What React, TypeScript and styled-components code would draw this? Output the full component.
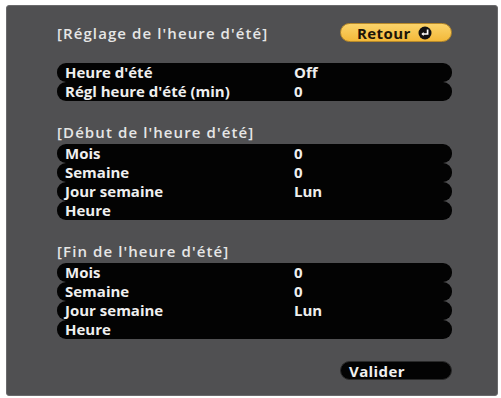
import styled, { createGlobalStyle } from "styled-components";

const GlobalStyle = createGlobalStyle`
	html, body {
		margin: 0;
		padding: 0;
		background: #ffffff;
	}
`;

const Panel = styled.div`
	box-sizing: border-box;
	margin: 5px 3px 0 6px;
	height: 391px;
	background: #505052;
	border: 1px solid #6a6a6c;
	border-radius: 3px;
	padding: 17px 45px 0 50px;
	font-family: "Open Sans", "DejaVu Sans", sans-serif;
	color: #ececec;
`;

const Header = styled.div`
	display: flex;
	justify-content: space-between;
	align-items: center;
	height: 19px;
`;

const SectionTitle = styled.div<{ $top: number }>`
	margin-top: ${(p) => p.$top}px;
	height: 18px;
	line-height: 18px;
	font-size: 15px;
	font-weight: 600;
	letter-spacing: 1.1px;
	color: #e6e6e6;
`;

const RowGroup = styled.div<{ $top: number }>`
	margin-top: ${(p) => p.$top}px;
	display: flex;
	flex-direction: column;
`;

const Row = styled.div`
	display: grid;
	grid-template-columns: 229px 1fr;
	align-items: center;
	height: 19px;
	padding-left: 8px;
	background: #030303;
	border-radius: 9px;
	font-size: 15px;
	font-weight: 700;
	letter-spacing: 0;
	line-height: 19px;
	color: #efefef;
`;

const PillButton = styled.div<{ $tone: "gold" | "dark" }>`
	box-sizing: border-box;
	width: 112px;
	height: 19px;
	display: flex;
	align-items: center;
	gap: 7px;
	padding-left: ${(p) => (p.$tone === "gold" ? "16px" : "8px")};
	border-radius: 10px;
	font-size: 15px;
	font-weight: 700;
	letter-spacing: 0.4px;
	background: ${(p) =>
		p.$tone === "gold"
			? "linear-gradient(#fbd36a, #f3b93a)"
			: "#030303"};
	border: 1px solid ${(p) => (p.$tone === "gold" ? "#b88a2a" : "#2a2a2a")};
	color: ${(p) => (p.$tone === "gold" ? "#1c1408" : "#f0f0f0")};
`;

const Footer = styled.div`
	display: flex;
	justify-content: flex-end;
	margin-top: 22px;
`;

const ReturnIcon = () => (
	<svg width="14" height="14" viewBox="0 0 14 14">
		<circle cx="7" cy="7" r="6.5" fill="#111" />
		<path d="M9.6 3.6 V8 H4.8" stroke="#fff" strokeWidth="1.7" fill="none" />
		<path d="M3.4 8 L5.6 5.9 V10.1 Z" fill="#fff" />
	</svg>
);

type Item = [string, string];

const Group = ({ items, top }: { items: Item[]; top: number }) => (
	<RowGroup $top={top}>
		{items.map(([label, value]) => (
			<Row key={label}>
				<span>{label}</span>
				<span>{value}</span>
			</Row>
		))}
	</RowGroup>
);

const period: Item[] = [
	["Mois", "0"],
	["Semaine", "0"],
	["Jour semaine", "Lun"],
	["Heure", ""],
];

const App = () => (
	<>
		<GlobalStyle />
		<Panel>
			<Header>
				<SectionTitle $top={0}>[Réglage de l'heure d'été]</SectionTitle>
				<PillButton $tone="gold">
					Retour <ReturnIcon />
				</PillButton>
			</Header>
			<Group
				top={21}
				items={[
					["Heure d'été", "Off"],
					["Régl heure d'été (min)", "0"],
				]}
			/>
			<SectionTitle $top={22}>[Début de l'heure d'été]</SectionTitle>
			<Group top={3} items={period} />
			<SectionTitle $top={22}>[Fin de l'heure d'été]</SectionTitle>
			<Group top={3} items={period} />
			<Footer>
				<PillButton $tone="dark">Valider</PillButton>
			</Footer>
		</Panel>
	</>
);

export default App;
